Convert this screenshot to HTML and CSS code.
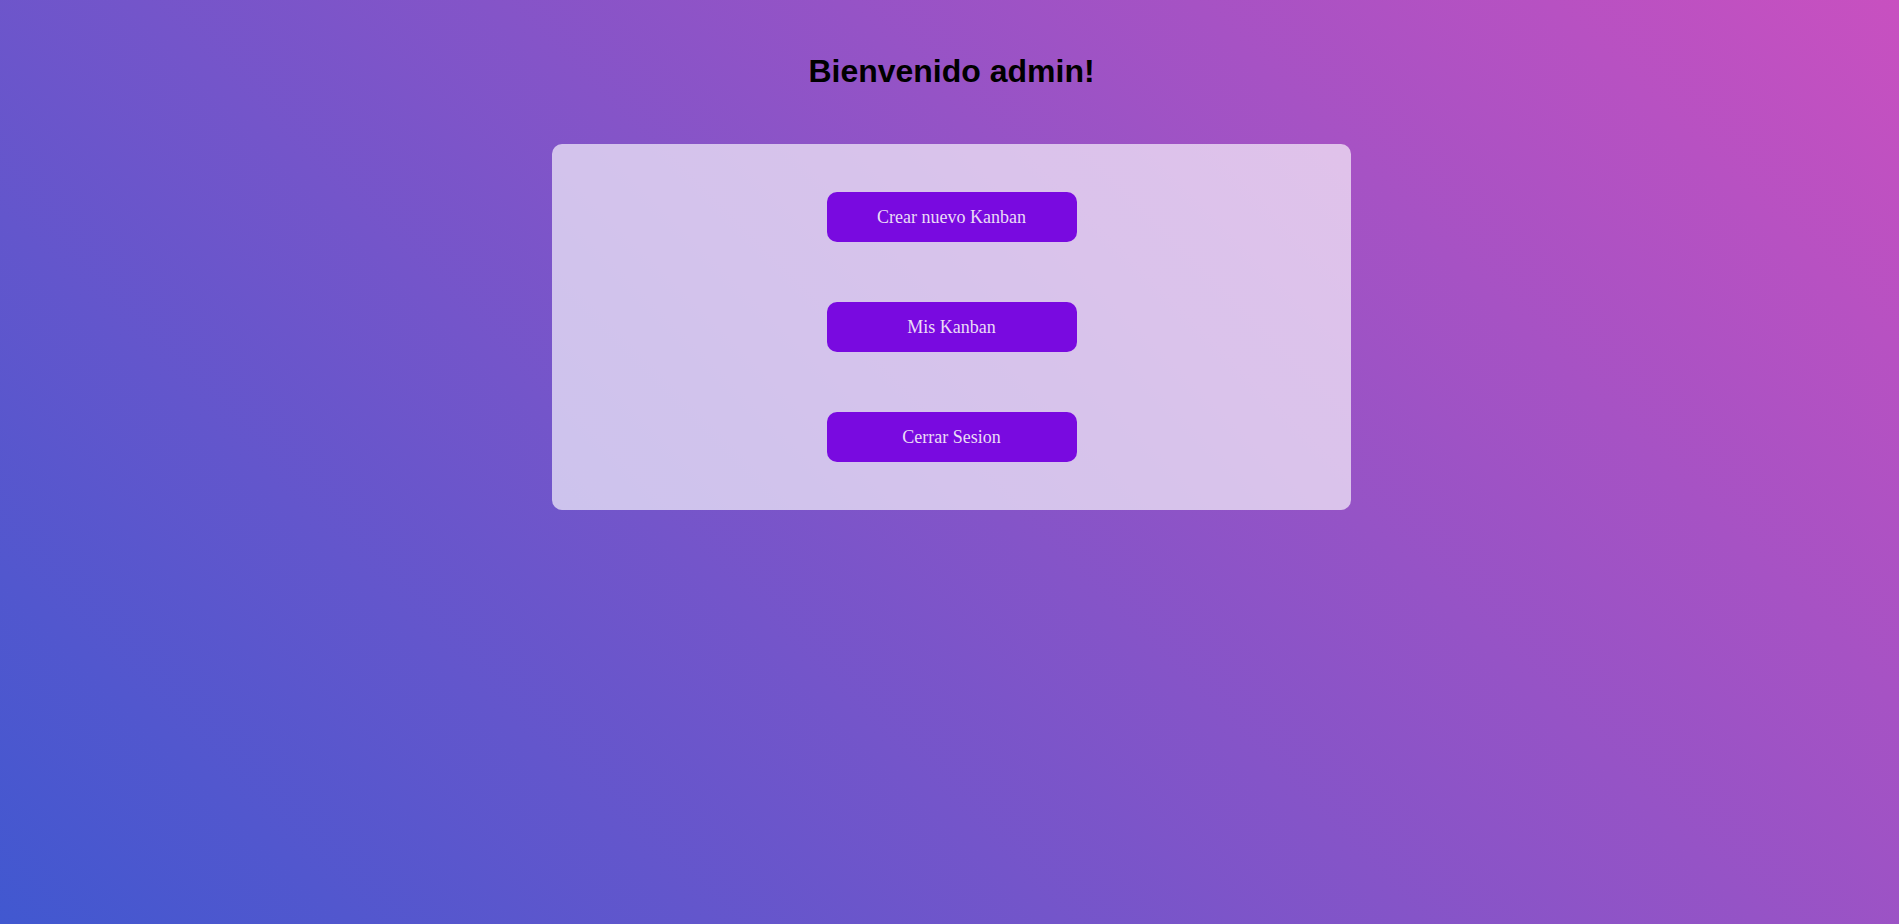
FILE: index.html
```html
<!DOCTYPE html>
<html lang="es">
<head>
<meta charset="utf-8">
<title>Inicio</title>
<link rel="stylesheet" href="styles.css">
</head>
<body>
<main class="page">
  <h1 class="title">Bienvenido admin!</h1>
  <section class="card">
    <button class="btn" type="button">Crear nuevo Kanban</button>
    <button class="btn" type="button">Mis Kanban</button>
    <button class="btn" type="button">Cerrar Sesion</button>
  </section>
</main>
</body>
</html>
```
FILE: styles.css
```css
html, body {
  margin: 0;
  height: 100%;
}
body {
  background: linear-gradient(45deg, #4158D0 0%, #C850C0 100%);
  font-family: "Liberation Sans", Arial, sans-serif;
}
.page {
  display: flex;
  flex-direction: column;
  align-items: center;
  padding: 53px 0 0 4px;
}
.title {
  margin: 0 0 54px;
  font-size: 32px;
  line-height: 37px;
  font-weight: bold;
  color: #000;
}
.card {
  box-sizing: border-box;
  width: 799px;
  padding: 48px 0;
  display: flex;
  flex-direction: column;
  align-items: center;
  gap: 60px;
  background: rgba(255, 255, 255, 0.65);
  border-radius: 10px;
}
.btn {
  width: 250px;
  height: 50px;
  border: none;
  border-radius: 10px;
  background: #790ae0;
  color: #eadcf6;
  font-family: "Liberation Serif", "Times New Roman", serif;
  font-size: 18px;
  padding: 0;
  cursor: pointer;
}
```
